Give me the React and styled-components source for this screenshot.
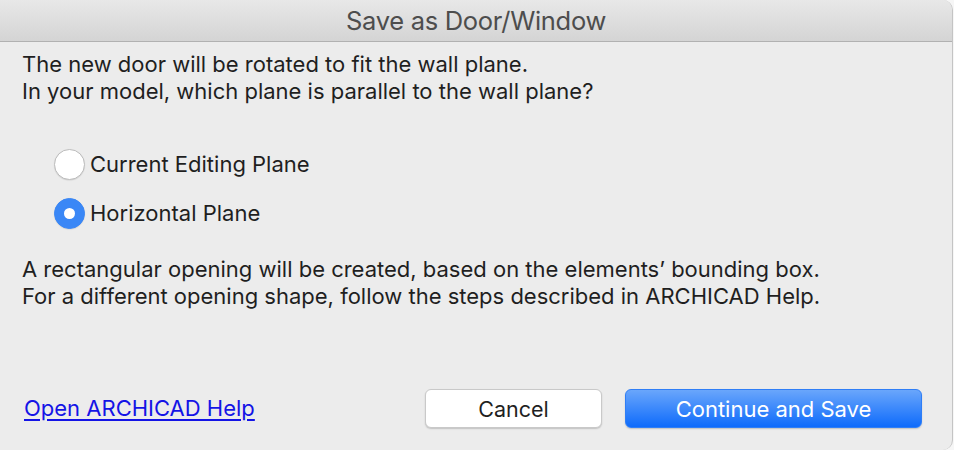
import React, { useState } from "react";
import styled, { createGlobalStyle } from "styled-components";

const GlobalStyle = createGlobalStyle`
  html, body {
    margin: 0;
    padding: 0;
    background: #f6f6f6;
  }
  body {
    font-family: "Inter", "Liberation Sans", sans-serif;
  }
`;

const Window = styled.div`
  width: 953px;
  height: 450px;
  box-sizing: border-box;
  background: #ececec;
  border-right: 1px solid #c4c4c4;
  border-radius: 0 10px 10px 0;
  overflow: hidden;
  display: flex;
  flex-direction: column;
`;

const TitleBar = styled.div`
  height: 41px;
  flex: none;
  display: flex;
  align-items: center;
  justify-content: center;
  background: linear-gradient(#e8e8e8, #d4d4d4);
  border-bottom: 1px solid #b1b1b1;
  color: #4d4d4d;
  font-size: 25.5px;
  letter-spacing: -0.3px;
`;

const Body = styled.div`
  flex: 1;
  display: flex;
  flex-direction: column;
  padding: 9px 30px 22px 22px;
  color: #1f1f1f;
  font-size: 22px;
  line-height: 27px;
`;

const Paragraph = styled.p`
  margin: 0;
`;

const RadioGroup = styled.div`
  display: flex;
  flex-direction: column;
  gap: 18px;
  margin: 44px 0 27px 32px;
`;

const RadioRow = styled.label`
  display: flex;
  align-items: center;
  gap: 5px;
  cursor: default;
`;

const RadioCircle = styled.span`
  width: 31px;
  height: 31px;
  box-sizing: border-box;
  border-radius: 50%;
  display: flex;
  align-items: center;
  justify-content: center;
  background: ${(p) => (p.$checked ? "#3a87f6" : "#fff")};
  border: 1px solid ${(p) => (p.$checked ? "#3a87f6" : "#bdbdbd")};
  box-shadow: 0 0.5px 1px rgba(0, 0, 0, 0.12);

  &::after {
    content: "";
    display: ${(p) => (p.$checked ? "block" : "none")};
    width: 11px;
    height: 11px;
    border-radius: 50%;
    background: #fff;
  }
`;

const Footer = styled.div`
  margin-top: auto;
  display: flex;
  align-items: center;
  padding-left: 2px;
`;

const HelpLink = styled.a`
  color: #1414e6;
  text-decoration: underline;
  text-underline-offset: 3px;
  font-size: 22px;
  margin-right: auto;
`;

const Button = styled.button`
  height: 39px;
  width: ${(p) => p.$width}px;
  box-sizing: border-box;
  border-radius: 6px;
  font-family: inherit;
  font-size: ${(p) => (p.$primary ? 22 : 21.5)}px;
  margin-left: ${(p) => p.$gap || 0}px;
  border: ${(p) => (p.$primary ? "1px solid #2f7ef6" : "1px solid #c9c9c9")};
  background: ${(p) =>
    p.$primary ? "linear-gradient(#6aa6fb, #0e6bfb)" : "#ffffff"};
  color: ${(p) => (p.$primary ? "#fff" : "#1f1f1f")};
  box-shadow: 0 1px 1.5px rgba(0, 0, 0, 0.18);
`;

export default function App() {
  const [plane, setPlane] = useState("horizontal");
  const options = [
    { id: "editing", label: "Current Editing Plane" },
    { id: "horizontal", label: "Horizontal Plane" },
  ];

  return (
    <>
      <GlobalStyle />
      <Window>
        <TitleBar>Save as Door/Window</TitleBar>
        <Body>
          <Paragraph>
            The new door will be rotated to fit the wall plane.
            <br />
            In your model, which plane is parallel to the wall plane?
          </Paragraph>
          <RadioGroup>
            {options.map((o) => (
              <RadioRow key={o.id} onClick={() => setPlane(o.id)}>
                <RadioCircle $checked={plane === o.id} />
                {o.label}
              </RadioRow>
            ))}
          </RadioGroup>
          <Paragraph>
            A rectangular opening will be created, based on the elements’
            bounding box.
            <br />
            For a different opening shape, follow the steps described in
            ARCHICAD Help.
          </Paragraph>
          <Footer>
            <HelpLink href="#">Open ARCHICAD Help</HelpLink>
            <Button $width={177}>Cancel</Button>
            <Button $primary $width={297} $gap={23}>
              Continue and Save
            </Button>
          </Footer>
        </Body>
      </Window>
    </>
  );
}
